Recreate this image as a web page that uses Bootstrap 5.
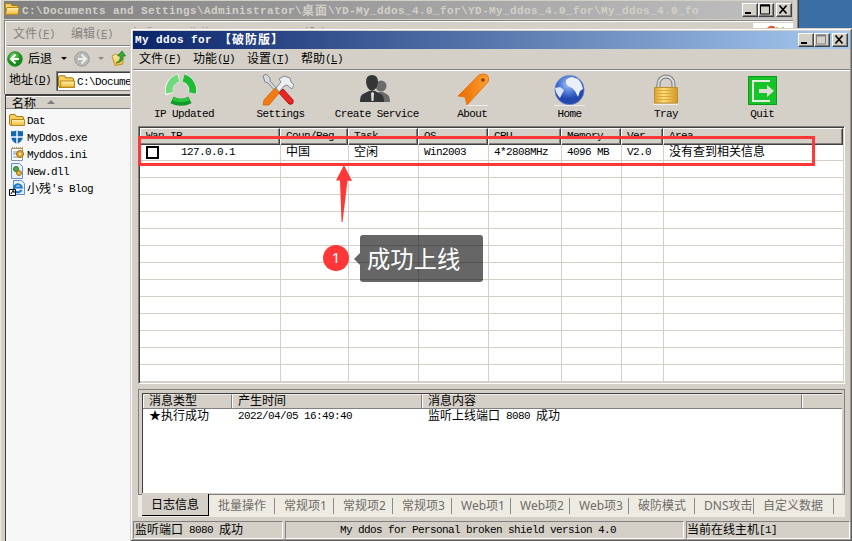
<!DOCTYPE html>
<html lang="zh-CN">
<head>
<meta charset="utf-8">
<title>My ddos for 【破防版】</title>
<link href="https://cdn.jsdelivr.net/npm/bootstrap@5.3.0/dist/css/bootstrap.min.css" rel="stylesheet">
<style>
:root{--face:#d4d0c8;--sh:#808080;--dk:#404040;--red:#ff3737}
body{width:852px;height:541px;overflow:hidden;background:#3a6ea5;color:#000;font:11px/14px "Liberation Mono","Noto Sans CJK SC",monospace;letter-spacing:-.6px;white-space:pre}
svg{display:block;flex:none}
.z{font-family:"Noto Sans CJK SC",sans-serif;font-size:12px;letter-spacing:0;line-height:0;vertical-align:-1px}
.d-flex>.z{line-height:inherit}
.win{position:absolute;background:var(--face)}
.back{left:0;top:0;width:799px;height:545px;padding:1px 5px 0 4px;border-right:1px solid var(--dk);box-shadow:inset -1px 0 var(--sh),inset 1px 0 #ece9e2,inset 3px 0 var(--face)}
.front{left:130px;top:28px;width:722px;height:513px;padding:3px 2px 0 3px;box-shadow:inset 1px 1px var(--face),inset -1px -1px #606060,inset 2px 2px #fff,inset -2px -2px #9a9890}
.cap{font-weight:700;letter-spacing:.4px;line-height:18px;height:18px}
.cap .z{letter-spacing:1px}
.back .cap{background:linear-gradient(90deg,#808080,#c0c0c0);color:var(--face);line-height:20px}
.front .cap{background:linear-gradient(90deg,#0a246a,#a6caf0);color:#fff}
.wb{width:16px;height:14px;background:var(--face);border:1px solid;border-color:#fff var(--dk) var(--dk) #fff;box-shadow:inset -1px -1px var(--sh)}
.inner{border-left:1px solid var(--sh);border-top:1px solid var(--sh);box-shadow:inset 1px 1px #fff;padding:2px 0 0 2px;margin-top:1px}
.gm{color:#85827d;height:22px;line-height:23px;gap:16px;padding-left:6px}
.rule{height:2px;border-top:1px solid var(--sh);border-bottom:1px solid #fff}
.bar1{height:23px;line-height:21px}
.bar1>.z{padding-bottom:2px}
.addr{height:24px;line-height:21px}
.addr-in{border:1px solid var(--sh);border-right:0;box-shadow:inset 1px 1px var(--dk);background:#fff;height:20px;line-height:20px;margin-top:1px}
.files{width:126px;height:460px;background:#f7f7f7;border-left:1px solid var(--dk);border-top:2px solid var(--dk);margin-left:1px}
.fh{height:13px;line-height:12px;background:var(--face);border-bottom:1px solid var(--sh);border-top:1px solid #fff}
.frow{height:17px;line-height:18px}
.frow>span{padding-left:2px}
.mm{height:20px;line-height:21px;padding-left:6px;gap:12px}
.mm span.it,.gm span.it{width:42px;flex:none}
.tools{height:55px;padding:2px 0 0 2.8px}
.tl{width:96.4px;text-align:center;flex:none;line-height:14px}
.tl svg{margin:0 auto 1px}
.grid1{margin:0 5px 0 5px;height:258px;border:1px solid var(--sh);border-right-color:#fff;border-bottom-color:#fff;box-shadow:inset 1px 1px var(--dk),inset -1px -1px var(--face);background:#fff;padding:1px}
.gh{height:16px}
.gh>div{background:var(--face);border:1px solid;border-color:#fff var(--dk) var(--dk) #fff;box-shadow:inset -1px -1px var(--sh);line-height:15px;padding-left:5px}
.cols{display:grid;grid-template-columns:140px 68px 70px 70px 73px 60px 42px 1fr}
.lines{height:238px;padding-left:1px;background:repeating-linear-gradient(180deg,transparent 0 16px,var(--face) 16px 17px)}
.lines>div{border-right:1px solid var(--face);line-height:17px;padding-left:5px}
.lines>div:last-child{border-right:0}
.ck{width:13px;height:13px;border:2px solid #000;background:#fff;margin:2px 22px 0 0}
.logp{margin:5px 5px 0 5px;height:106px;border:1px solid var(--sh);padding:3px 2px 2px 3px}
.logl{height:100px;background:#fff;border-left:1px solid var(--dk);border-top:1px solid var(--dk)}
.lc{display:grid;grid-template-columns:89px 190px 380px 1fr}
.lh{height:15px;line-height:13px;background:var(--face);border-bottom:1px solid var(--sh)}
.lh>div{border-right:1px solid var(--sh);border-left:1px solid #fff;padding-left:5px;border-top:1px solid #efede8}
.lh>div:last-child{border-right:0}
.lr>div{padding-left:6px;line-height:14px}
.tabs{margin:0 5px;height:22px;background:#eeebe3;color:#6e6c68;font:12px/22px "Noto Sans","Noto Sans CJK SC",sans-serif;letter-spacing:0;padding-left:4px}
.tab1{width:67px;background:var(--face);color:#000;border-right:1px solid #000;border-bottom:1px solid #000;text-align:center;height:22px;margin-top:-1px;line-height:22px}
.tb{border-right:1px solid #8c8a86;height:16px;line-height:15px;margin-top:3px;padding-left:9px}
.w59{width:59px}.w66{width:66px}.w80{width:80px}
.stat{margin-top:4px;height:18px;gap:2px;line-height:17px}
.stat>div{border:1px solid;border-color:var(--sh) #fff #fff var(--sh)}
.hl{position:absolute;left:138px;top:136px;width:677px;height:30px;border:3px solid var(--red)}
.arr{position:absolute;left:334px;top:164px}
.dot{position:absolute;left:323px;top:245px;width:26px;height:26px;border-radius:50%;background:var(--red);color:#fff;text-align:center;font:15px/25px "Noto Sans",sans-serif;letter-spacing:0}
.tip{position:absolute;left:360px;top:235px;width:123px;height:47px;border-radius:3px;background:rgba(0,0,0,.6);color:#fff;font:23.3px/47px "Noto Sans CJK SC",sans-serif;letter-spacing:0;padding-left:7px}
.tip::before{content:"";position:absolute;left:-6px;top:18px;border:6px solid transparent;border-left:0;border-right-color:rgba(0,0,0,.6)}
</style>
<script src="https://cdn.jsdelivr.net/npm/bootstrap@5.3.0/dist/js/bootstrap.bundle.min.js"></script>
</head>
<body><svg width="0" height="0" class="position-absolute"><defs><linearGradient id="yl" x2="0" y2="1"><stop stop-color="#fff3b0"/><stop offset="1" stop-color="#efb83c"/></linearGradient><linearGradient id="or" x2="1"><stop stop-color="#e86a00"/><stop offset="1" stop-color="#ffa032"/></linearGradient><radialGradient id="gl" cx=".45" cy=".3"><stop stop-color="#a8c4f4"/><stop offset=".6" stop-color="#4a78d6"/><stop offset="1" stop-color="#2348ae"/></radialGradient><radialGradient id="gn" cx=".4" cy=".3"><stop stop-color="#7fd66b"/><stop offset="1" stop-color="#158a17"/></radialGradient><linearGradient id="lk" x2="1"><stop stop-color="#dda02c"/><stop offset=".4" stop-color="#ffdf78"/><stop offset="1" stop-color="#d3921f"/></linearGradient>
<symbol id="fold" viewBox="0 0 16 16"><path d="M1 4q0-1.500 1.500-1.500h4L8 4.500h5q1 0 1 1V13H2z" fill="#f6cf5c" stroke="#a9790f"/><path d="M1.500 13.500 3 6.500h12l-1 7z" fill="url(#yl)" stroke="#b98a1c"/></symbol>
<symbol id="fold2" viewBox="0 0 16 16"><path d="M.5 4q0-1.500 1.500-1.500h4L7.500 4.500H13q1.500 0 1.500 1.500v7.500H1.500L.5 12z" fill="#f6cf5c" stroke="#a9790f"/><path d="M2.500 13.500V7.500h13v6z" fill="url(#yl)" stroke="#b98a1c"/></symbol>
<symbol id="mn" viewBox="0 0 12 11"><path d="M2 8h6v2H2z"/></symbol><symbol id="mx" viewBox="0 0 12 11"><path d="M1.500 1h9v9h-9z" fill="none" stroke="currentColor"/><path d="M1 .5h10v2H1z" fill="currentColor"/></symbol><symbol id="cl" viewBox="0 0 12 11"><path d="m2.500 1.500 7 8m0-8-7 8" stroke="#000" stroke-width="1.700"/></symbol></defs></svg><div class="win back"><div class="cap d-flex align-items-start"><svg width="16" height="16"><use href="#fold"/></svg><div class="flex-grow-1" style="padding-left:2px">C:\Documents and Settings\Administrator\<span class="z">桌面</span>\YD-My_ddos_4.0_for\YD-My_ddos_4.0_for\My_ddos_4.0_fo</div><div class="d-flex" style="padding:2px 1px 0 0"><div class="wb"><svg width="12" height="11"><use href="#mn"/></svg></div><div class="wb text-black"><svg width="12" height="11"><use href="#mx"/></svg></div><div class="wb" style="margin-left:2px"><svg width="12" height="11"><use href="#cl"/></svg></div></div></div><div class="inner"><div class="gm d-flex"><span class="it"><span class="z">文件</span>(<u>F</u>)</span><span class="it"><span class="z">编辑</span>(<u>E</u>)</span><span class="it"><span class="z">查看</span>(<u>V</u>)</span><span class="it"><span class="z">收藏</span>(<u>A</u>)</span><span class="it"><span class="z">工具</span>(<u>T</u>)</span><span class="it"><span class="z">帮助</span>(<u>H</u>)</span><svg class="ms-auto bg-white" width="40" height="22"><path d="M14 5q4-4 8-1v8h-8z" fill="#e8532b"/><path d="M23 4q4 2 8 0v8h-8z" fill="#79b649"/></svg></div><div class="rule"></div><div class="bar1 d-flex align-items-center"><svg width="16" height="16"><circle cx="8" cy="8" r="7.300" fill="url(#gn)" stroke="#2f8f2b"/><path d="M8.500 3.500 4 8l4.500 4.500M4.500 8H12" fill="none" stroke="#fff" stroke-width="2"/></svg><span class="z" style="margin-left:5px">后退</span><svg width="8" height="5" style="margin-left:8px"><path d="M1 1h6L4 4z"/></svg><svg width="16" height="16" style="margin-left:6px"><circle cx="8" cy="8" r="7.200" fill="#b8b8b6" stroke="#999"/><path d="m7.500 3.500 4.500 4.500-4.500 4.500M12 8H4" fill="none" stroke="#eee" stroke-width="2"/></svg><svg width="8" height="5" style="margin-left:7px"><path d="M1 1h6L4 4z" fill="#888"/></svg><svg width="15" height="16" style="margin:0 0 2px 6px"><path d="M1 6 5 4l2 1 5-1v10l-8 1.500z" fill="url(#yl)" stroke="#c39325"/><path d="M5 13q5-2 4-7H6.500L11 1l3.500 5H12q1 6-7 7z" fill="#39aa35" stroke="#19751a" stroke-width=".7"/></svg></div><div class="addr d-flex"><span style="width:49px;padding-left:2px"><span class="z">地址</span>(<u>D</u>)</span><div class="addr-in flex-grow-1 d-flex"><svg width="17" height="17" style="margin:1px 2px 0 1px"><use href="#fold2"/></svg>C:\Documents and Settings</div></div></div><div class="files"><div class="fh d-flex"><span class="z" style="margin:0 11px 0 6px">名称</span><svg width="8" height="10"><path d="m0 7 4-4 4 4z" fill="#808080"/></svg></div><div style="padding:3px 0 0 3px"><div class="frow d-flex"><svg width="16" height="16"><use href="#fold2"/></svg><span>Dat</span></div><div class="frow d-flex"><svg width="16" height="16"><path d="M2 2q3 1 6-1 3 2 6 1v6q-1 5-6 7-5-2-6-7z" fill="#1767b0"/><path d="M8 1v14M2 8h12" stroke="#eef6ff" stroke-width="1.500"/></svg><span>MyDdos.exe</span></div><div class="frow d-flex"><svg width="16" height="16"><path d="M2.500 2.500h11v12h-11z" fill="#fff" stroke="#8094b5"/><path d="M3 2h11" stroke="#c79a35" stroke-width="2" stroke-dasharray="1 1"/><path d="M4 6h5M4 8h4M4 11h8" stroke="#6f92c9"/><circle cx="11" cy="8" r="3.500" fill="#e6a82c" stroke="#a46d0e"/><circle cx="11" cy="8" r="1" fill="#fff"/></svg><span>Myddos.ini</span></div><div class="frow d-flex"><svg width="16" height="16"><path d="M2.500.500h8l3 3v12h-11z" fill="#e6f0ff" stroke="#6a8ec8"/><circle cx="7" cy="6" r="2.500" fill="#58a841" stroke="#2f7423"/><circle cx="10" cy="10" r="2.500" fill="#e7b73b" stroke="#94731a"/></svg><span>New.dll</span></div><div class="frow d-flex"><svg width="16" height="16"><path d="M4.500.500h8l3 3v11h-11z" fill="#e4effc" stroke="#5d8cc9"/><path d="M12.500 10a4 4 0 1 1 .3-2.500H6" fill="none" stroke="#1b79cc" stroke-width="2"/><path d="M.5 9.500h6v6h-6z" fill="#fff" stroke="#000"/><path d="M2 14q0-2 3-3M3 11h2v2" fill="none" stroke="#000"/></svg><span><span class="z">小残</span>'s Blog</span></div></div></div></div><div class="win front"><div class="cap d-flex"><div class="flex-grow-1" style="padding-left:2px">My ddos for <span class="z">【破防版】</span></div><div class="d-flex" style="padding:2px 2px 0 0"><div class="wb"><svg width="12" height="11"><use href="#mn"/></svg></div><div class="wb" style="color:#808080"><svg width="12" height="11"><use href="#mx"/></svg></div><div class="wb" style="margin-left:2px"><svg width="12" height="11"><use href="#cl"/></svg></div></div></div><div class="mm d-flex"><span class="it"><span class="z">文件</span>(<u>F</u>)</span><span class="it"><span class="z">功能</span>(<u>U</u>)</span><span class="it"><span class="z">设置</span>(<u>T</u>)</span><span class="it"><span class="z">帮助</span>(<u>L</u>)</span></div><div class="rule"></div><div class="tools d-flex"><div class="tl"><svg width="32" height="33" style="transform:translateX(-3px)"><g fill="none"><path d="M4.500 21A12.500 12.500 0 0 1 14 5" stroke="#fff" stroke-width="8"/><path d="M4.600 20A12.500 12.500 0 0 1 13.500 5" stroke="#6fd97c" stroke-width="7"/><path d="M18.500 5A12.500 12.500 0 0 1 27.400 20" stroke="#fff" stroke-width="8"/><path d="M18.500 5A12.500 12.500 0 0 1 27.400 20" stroke="#1fbd35" stroke-width="7"/><path d="M7 27q9 4.500 18 0" stroke="#12992a" stroke-width="7"/><path d="M8 26q8 3 16 0" stroke="#25c93b" stroke-width="3"/></g></svg>IP Updated</div><div class="tl"><svg width="32" height="33" style="transform:translateX(-2px)"><path d="m1 3 3-2 4 4v3l8 9-2 2-8-9-3-1z" fill="#d5d8dc" stroke="#81878d"/><path d="m17 20 4-4 10 11q1 5-4 4z" fill="#ec2522" stroke="#b30f12"/><path d="m2 27 11-12 5 4L7 32H1z" fill="#f37a12" stroke="#cf5c00" stroke-width=".7"/><path d="m14 15 5-6-2-3 5-3 6 2 1 4 3 3-2 4-5-4-3 1-5 6z" fill="#eceef0" stroke="#85898f"/></svg>Settings</div><div class="tl"><svg width="32" height="33" style="transform:translateX(-2px)"><g fill="#6b6b6c"><circle cx="22" cy="13" r="5.500"/><path d="M15 29q2-7 5-10h4l5 3q2 2 2 7z"/></g><g fill="#343536"><path d="M7 9q0-7 6-7t6 7q-1 8-6 9-5-1-6-9z"/><path d="M1 29q0-7 3-8l6-3h6l6 3q3 1 3 8z"/></g><path d="m12 20 1.500-1 1.500 1-.5 8h-2z" fill="#ddd"/></svg>Create Service</div><div class="tl"><svg width="33" height="33"><path d="M1 23 22 2q5-2 8 0 3 3 1 7L10 32l-2-8z" fill="url(#or)" stroke="#e77713"/><path d="M10 32.500h21" stroke="#eee"/><circle cx="26" cy="7" r="1.800" fill="#7a4310"/></svg><span style="padding-right:2px">About</span></div><div class="tl"><svg width="32" height="33"><circle cx="15.500" cy="17" r="14.700" fill="url(#gl)" stroke="#7d95cf" stroke-width=".6"/><path d="M12 7q3-3 6-3l6 2q4 4 5 10l-3 2-2 6-3-6-3-3-4-2-2-3z" fill="#e9f0fc"/><path d="m1 15 5-1 4 3-2 4-2 4q-4-4-5-10z" fill="#d9e5fb"/><path d="M0 32.500h31" stroke="#eee"/></svg>Home</div><div class="tl"><svg width="32" height="33"><path d="M8.500 16v-5a7.500 7.500 0 0 1 15 0v5" fill="none" stroke="#777" stroke-width="4"/><path d="M8.500 16v-5a7.500 7.500 0 0 1 15 0v5" fill="none" stroke="#ddd" stroke-width="2"/><path d="M4.500 14.500h23V30h-23z" fill="url(#lk)" stroke="#c08e2a"/><path d="M5 17.500h22m-22 3h22m-22 3h22m-22 3h22" stroke="#dca63a"/><path d="M3 31.500h25" stroke="#eee"/></svg>Tray</div><div class="tl"><svg width="32" height="33"><path d="M2 3h29v29H2z" fill="#16c328"/><path d="M2.500 3.500h28v28h-28z" fill="none" stroke="#0c9a1d"/><path d="M24 8H7v20h17" fill="none" stroke="#e3efdc" stroke-width="2"/><path d="M13 16h8v-4l7 6-7 6v-4h-8z" fill="#dedfd2"/></svg>Quit</div></div><div class="grid1"><div class="gh cols"><div>Wan.IP</div><div>Coun/Reg</div><div>Task</div><div>OS</div><div>CPU</div><div>Memory</div><div>Ver</div><div>Area</div></div><div class="cols lines"><div class="d-flex"><span class="ck"></span>127.0.0.1</div><div><span class="z">中国</span></div><div><span class="z">空闲</span></div><div>Win2003</div><div>4*2808MHz</div><div>4096 MB</div><div>V2.0</div><div><span class="z">没有查到相关信息</span></div></div></div><div class="logp"><div class="logl"><div class="lc lh"><div><span class="z">消息类型</span></div><div><span class="z">产生时间</span></div><div><span class="z">消息内容</span></div><div></div></div><div class="lc lr"><div><span class="z">★执行成功</span></div><div>2022/04/05 16:49:40</div><div><span class="z">监听上线端口</span> 8080 <span class="z">成功</span></div></div></div></div><div class="tabs d-flex"><div class="tab1">日志信息</div><div class="tb w66">批量操作</div><div class="tb w59">常规项1</div><div class="tb w59">常规项2</div><div class="tb w59">常规项3</div><div class="tb w59">Web项1</div><div class="tb w59">Web项2</div><div class="tb w59">Web项3</div><div class="tb w66">破防模式</div><div class="tb w59">DNS攻击</div><div class="tb w80">自定义数据</div></div><div class="stat d-flex"><div style="width:150px;padding-left:1px"><span class="z">监听端口</span> 8080 <span class="z">成功</span></div><div style="width:399px;padding-left:54px">My ddos for Personal broken shield version 4.0</div><div class="flex-grow-1"><span class="z">当前在线主机</span>[1]</div></div></div><div class="hl"></div><svg class="arr" width="20" height="60"><path d="M10 1 18 17l-4.500-.500L8.500 58h-1L6 16.500H2z" fill="#ff3737"/></svg><div class="dot">1</div><div class="tip">成功上线</div></body>
</html>
